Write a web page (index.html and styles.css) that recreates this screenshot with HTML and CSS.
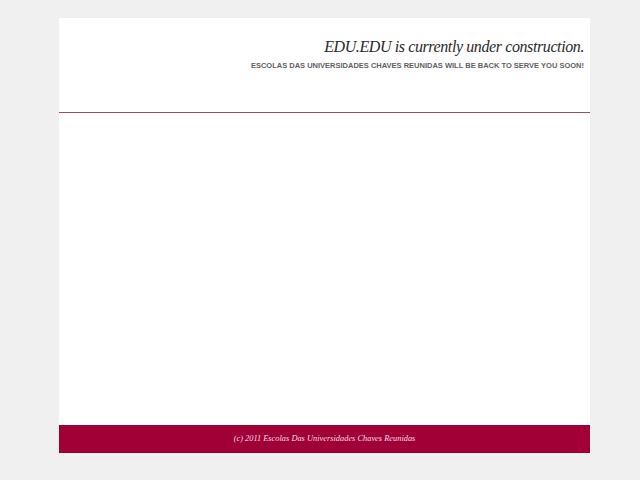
FILE: index.html
```html
<!DOCTYPE html>
<html>
<head>
<meta charset="utf-8">
<link rel="stylesheet" href="styles.css">
</head>
<body>
<div class="page">
  <div class="header">
    <h1 class="title">EDU.EDU is currently under construction.</h1>
    <p class="subtitle">ESCOLAS DAS UNIVERSIDADES CHAVES REUNIDAS WILL BE BACK TO SERVE YOU SOON!</p>
  </div>
  <div class="content"></div>
  <div class="footer">(c) 2011 Escolas Das Universidades Chaves Reunidas</div>
</div>
</body>
</html>
```
FILE: styles.css
```css
html, body { margin: 0; padding: 0; }
body { background: #f0f0f0; }
.page {
  width: 531px;
  margin: 18px 0 0 59px;
  background: #fff;
  display: flex;
  flex-direction: column;
}
.header {
  height: 95px;
  border-bottom: 1px solid #9e4d6a;
  padding: 0 6px 0 0;
  text-align: right;
  box-sizing: border-box;
}
.title {
  margin: 0;
  padding-top: 19px;
  font-family: "Liberation Serif", serif;
  font-style: italic;
  font-weight: normal;
  font-size: 16px;
  letter-spacing: -0.4px;
  line-height: 20px;
  color: #2a2a2a;
}
.subtitle {
  margin: 4px 0 0;
  font-family: "Liberation Sans", Arial, sans-serif;
  font-weight: bold;
  font-size: 7.5px;
  line-height: 10px;
  color: #5f5f5f;
}
.content { height: 312px; }
.footer {
  height: 28px;
  background: #a10037;
  color: #f2dbe3;
  font-family: "Liberation Serif", serif;
  font-style: italic;
  font-size: 8.4px;
  line-height: 28px;
  text-align: center;
}
```
